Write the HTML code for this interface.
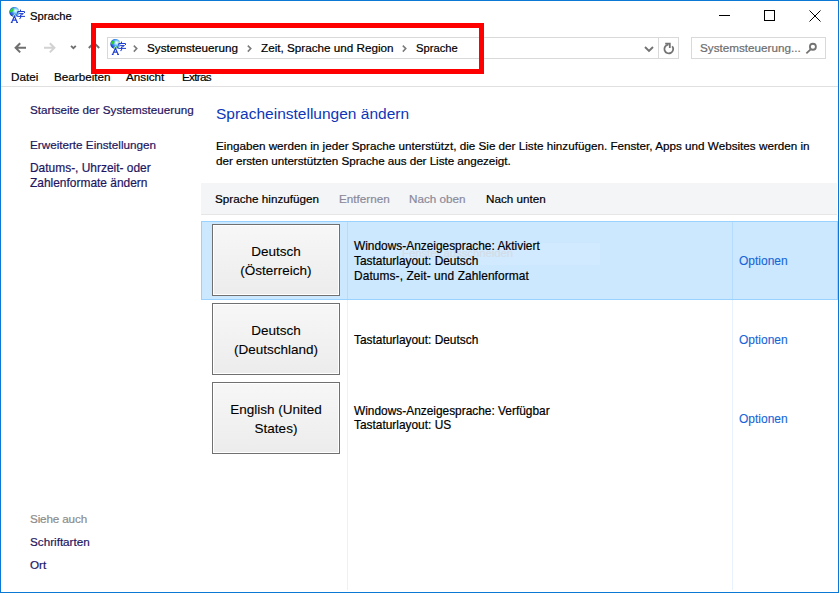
<!DOCTYPE html>
<html><head><meta charset="utf-8">
<style>
*{margin:0;padding:0;box-sizing:border-box}
html,body{width:839px;height:593px;overflow:hidden;background:#fff}
body{position:relative;font-family:"Liberation Sans",sans-serif;font-size:11.7px;color:#000;-webkit-text-stroke:0.2px currentColor}
.a{position:absolute;white-space:nowrap;line-height:15px}
.nav{color:#1e1660}
.frame{position:absolute;left:0;top:0;width:839px;height:593px;border:1px solid #0a78d4;z-index:50;pointer-events:none}
.box{position:absolute;border:1px solid #d9d9d9}
.btn{position:absolute;left:212px;width:128px;height:72px;border:1px solid #707070;background:linear-gradient(#f7f7f7,#ececec);box-shadow:inset 0 0 0 1px #fff}
.btn .l{position:absolute;left:0;width:126px;text-align:center;font-size:13.5px;line-height:19px;-webkit-text-stroke:0.1px currentColor}
.opt{color:#1565d8;font-size:12px;-webkit-text-stroke:0.1px currentColor}
.det{font-size:11.9px}
</style></head><body>
<div class="frame"></div>

<!-- title bar -->
<svg width="0" height="0" style="position:absolute">
 <defs>
  <radialGradient id="g1" cx="0.62" cy="0.38" r="0.75"><stop offset="0" stop-color="#ffffff"/><stop offset="0.2" stop-color="#a8e6ff"/><stop offset="0.5" stop-color="#3a8ae8"/><stop offset="0.85" stop-color="#1838c4"/><stop offset="1" stop-color="#1030b0"/></radialGradient>
  <symbol id="lang" viewBox="0 0 17 17">
   <circle cx="5.4" cy="5.0" r="5.1" fill="url(#g1)"/>
   <path d="M0.8 4.6 Q1.2 2.2 3.4 1.2 Q4.8 1.8 4.4 3.6 Q3.4 5.0 1.6 5.4 Z" fill="#28d42c"/>
   <path d="M3.6 8.4 Q5.0 7.0 6.8 7.4 Q7.4 8.8 6.2 9.8 Q4.6 10.2 3.6 9.4Z" fill="#6ad86a"/>
   <path d="M8.4 2.4 Q10.0 2.8 10.4 4.4 Q9.2 5.0 8.2 4.0Z" fill="#c0f0b0"/>
   <path d="M2.6 15.5 L5.4 9.2 L8.2 15.5 M3.6 13.1 L7.2 13.1 M1.8 15.5 L3.6 15.5 M7.2 15.5 L9.0 15.5" stroke="#fff" stroke-opacity="0.6" stroke-width="2.2" fill="none"/>
   <path d="M2.6 15.5 L5.4 9.2 L8.2 15.5 M3.6 13.1 L7.2 13.1 M1.8 15.5 L3.6 15.5 M7.2 15.5 L9.0 15.5" stroke="#1f3ed0" stroke-width="1.15" fill="none"/>
   <path d="M8.2 4 L16.2 4 L16.2 12 L8.2 12Z" fill="#fff" fill-opacity="0.35"/>
   <path d="M11.5 2.6 L11.5 4.0 M8.7 6.6 L8.7 4.5 L15.5 4.5 L15.5 6.0 M10.2 6.6 L14.4 6.6 L11.6 8.4 M8.2 9.4 L16 9.4 M11.6 7.6 L11.6 11.2 Q11.4 11.9 10.4 11.6" stroke="#1f3ed0" stroke-width="1.0" fill="none"/>
  </symbol>
 </defs>
</svg>
<svg style="position:absolute;left:9px;top:7px" width="17" height="17"><use href="#lang"/></svg>
<div class="a" style="left:30px;top:9px;font-size:11.2px">Sprache</div>
<!-- window buttons -->
<div style="position:absolute;left:719px;top:15px;width:11px;height:1px;background:#000"></div>
<div style="position:absolute;left:764px;top:10px;width:11px;height:11px;border:1px solid #000"></div>
<svg style="position:absolute;left:809px;top:10px" width="12" height="12" viewBox="0 0 12 12"><path d="M0.5 0.5 L11.5 11.5 M11.5 0.5 L0.5 11.5" stroke="#000" stroke-width="1"/></svg>

<!-- nav arrows -->
<svg style="position:absolute;left:10px;top:38px" width="50" height="20" viewBox="0 0 50 20"><path d="M16 9.8 L5.6 9.8 M10.2 5.2 L5.6 9.8 L10.2 14.4" stroke="#6f6f6f" stroke-width="2" fill="none"/><path d="M34 9.8 L44.4 9.8 M39.8 5.2 L44.4 9.8 L39.8 14.4" stroke="#d2d2d2" stroke-width="2" fill="none"/></svg>
<svg style="position:absolute;left:64px;top:38px" width="40" height="18" viewBox="0 0 40 18"><path d="M7 7.8 L9.4 10.2 L11.8 7.8" stroke="#6f6f6f" stroke-width="1.8" fill="none"/><path d="M24.8 10 L30 4.8 L35.2 10" stroke="#6f6f6f" stroke-width="1.9" fill="none"/></svg>
<!-- address box -->
<div class="box" style="left:107px;top:37px;width:572px;height:22px"></div>
<div style="position:absolute;left:658px;top:37px;width:1px;height:22px;background:#d9d9d9"></div>
<div class="box" style="left:691px;top:37px;width:135px;height:22px"></div>

<svg style="position:absolute;left:110px;top:39px" width="17" height="17"><use href="#lang"/></svg>
<svg style="position:absolute;left:130px;top:42px" width="10" height="12" viewBox="0 0 10 12"><path d="M3.8 3.6 L6.8 6.6 L3.8 9.6" stroke="#7a7a7a" stroke-width="1.5" fill="none"/></svg>
<svg style="position:absolute;left:244px;top:42px" width="10" height="12" viewBox="0 0 10 12"><path d="M3.8 3.6 L6.8 6.6 L3.8 9.6" stroke="#7a7a7a" stroke-width="1.5" fill="none"/></svg>
<svg style="position:absolute;left:399px;top:42px" width="10" height="12" viewBox="0 0 10 12"><path d="M3.8 3.6 L6.8 6.6 L3.8 9.6" stroke="#7a7a7a" stroke-width="1.5" fill="none"/></svg>
<svg style="position:absolute;left:640px;top:40px" width="16" height="16" viewBox="0 0 16 16"><path d="M5 7 L9 11 L13 7" stroke="#737373" stroke-width="1.9" fill="none"/></svg>
<svg style="position:absolute;left:660px;top:40px" width="16" height="16" viewBox="0 0 16 16"><path d="M8.4 4.6 A4.4 4.4 0 1 0 12.2 6.2" stroke="#737373" stroke-width="1.8" fill="none"/><path d="M5.2 3.6 L9.8 3.6 L9.8 8" stroke="#737373" stroke-width="1.8" fill="none"/></svg>
<svg style="position:absolute;left:800px;top:40px" width="18" height="16" viewBox="0 0 18 16"><circle cx="12.9" cy="6.75" r="3" stroke="#737373" stroke-width="1.8" fill="none"/><path d="M10.6 9.4 L6.4 13.4" stroke="#737373" stroke-width="1.8"/></svg>
<div class="a" style="left:147px;top:40px">Systemsteuerung</div>
<div class="a" style="left:261px;top:40px">Zeit, Sprache und Region</div>
<div class="a" style="left:416px;top:41px;font-size:11.2px">Sprache</div>
<div class="a" style="left:700px;top:40px;color:#6d6d6d">Systemsteuerung...</div>

<!-- menu -->
<div class="a" style="left:11px;top:69px">Datei</div>
<div class="a" style="left:54px;top:69px">Bearbeiten</div>
<div class="a" style="left:126px;top:69px">Ansicht</div>
<div class="a" style="left:182px;top:69px;letter-spacing:-0.7px">Extras</div>
<div style="position:absolute;left:1px;top:86px;width:837px;height:1px;background:#e0e0e0"></div>

<!-- left nav -->
<div class="a nav" style="left:30px;top:102px">Startseite der Systemsteuerung</div>
<div class="a nav" style="left:30px;top:137px">Erweiterte Einstellungen</div>
<div class="a nav" style="left:30px;top:161px;font-size:11.95px">Datums-, Uhrzeit- oder</div>
<div class="a nav" style="left:30px;top:176px;font-size:11.95px">Zahlenformate ändern</div>
<div class="a" style="left:30px;top:511px;color:#8c8c8c;letter-spacing:-0.15px">Siehe auch</div>
<div class="a nav" style="left:30px;top:534px">Schriftarten</div>
<div class="a nav" style="left:30px;top:557px">Ort</div>

<!-- main -->
<div class="a" style="left:216px;top:104px;font-size:15.5px;line-height:19px;color:#0d36b8;-webkit-text-stroke:0">Spracheinstellungen ändern</div>
<div class="a" style="left:216px;top:138px">Eingaben werden in jeder Sprache unterstützt, die Sie der Liste hinzufügen. Fenster, Apps und Websites werden in</div>
<div class="a" style="left:216px;top:153px;letter-spacing:-0.05px">der ersten unterstützten Sprache aus der Liste angezeigt.</div>

<div style="position:absolute;left:201px;top:183px;width:636px;height:31px;background:#f4f5f7"></div>
<div style="position:absolute;left:201px;top:214px;width:636px;height:1px;background:#e6e6e6"></div>
<div class="a" style="left:215px;top:191px">Sprache hinzufügen</div>
<div class="a" style="left:339px;top:191px;color:#8a8a9a">Entfernen</div>
<div class="a" style="left:409px;top:191px;color:#8a8a9a">Nach oben</div>
<div class="a" style="left:486px;top:191px">Nach unten</div>

<!-- column dividers -->
<div style="position:absolute;left:347px;top:221px;width:1px;height:369px;background:#e8f2fc"></div>
<div style="position:absolute;left:732px;top:221px;width:1px;height:369px;background:#e8f2fc"></div>

<!-- selected row -->
<div style="position:absolute;left:201px;top:221px;width:637px;height:79px;background:#cce8ff;border:1px solid #99d1ff"></div>
<div style="position:absolute;left:347px;top:222px;width:1px;height:77px;background:#b5dcfd"></div>
<div style="position:absolute;left:732px;top:222px;width:1px;height:77px;background:#b5dcfd"></div>

<div class="btn" style="top:224px"><div class="l" style="top:17px">Deutsch<br>(Österreich)</div></div>
<div class="btn" style="top:303px"><div class="l" style="top:17px">Deutsch<br>(Deutschland)</div></div>
<div class="btn" style="top:382px"><div class="l" style="top:17px">English (United<br>States)</div></div>

<div style="position:absolute;left:370px;top:243px;width:230px;height:22px;background:rgba(255,255,255,0.12)"></div>
<div class="a" style="left:402px;top:246px;font-size:11.3px;color:#d3dde6">Fenster ausschneiden</div>
<div class="a det" style="left:354px;top:239px">Windows-Anzeigesprache: Aktiviert</div>
<div class="a det" style="left:354px;top:254px">Tastaturlayout: Deutsch</div>
<div class="a det" style="left:354px;top:269px;letter-spacing:0.1px">Datums-, Zeit- und Zahlenformat</div>
<div class="a opt" style="left:739px;top:254px">Optionen</div>

<div class="a det" style="left:354px;top:333px">Tastaturlayout: Deutsch</div>
<div class="a opt" style="left:739px;top:333px">Optionen</div>

<div class="a det" style="left:354px;top:404px">Windows-Anzeigesprache: Verfügbar</div>
<div class="a det" style="left:354px;top:418px">Tastaturlayout: US</div>
<div class="a opt" style="left:739px;top:412px">Optionen</div>

<!-- red highlight -->
<div style="position:absolute;left:91px;top:23px;width:393px;height:51px;border:5px solid #ff0000;z-index:40"></div>
</body></html>
